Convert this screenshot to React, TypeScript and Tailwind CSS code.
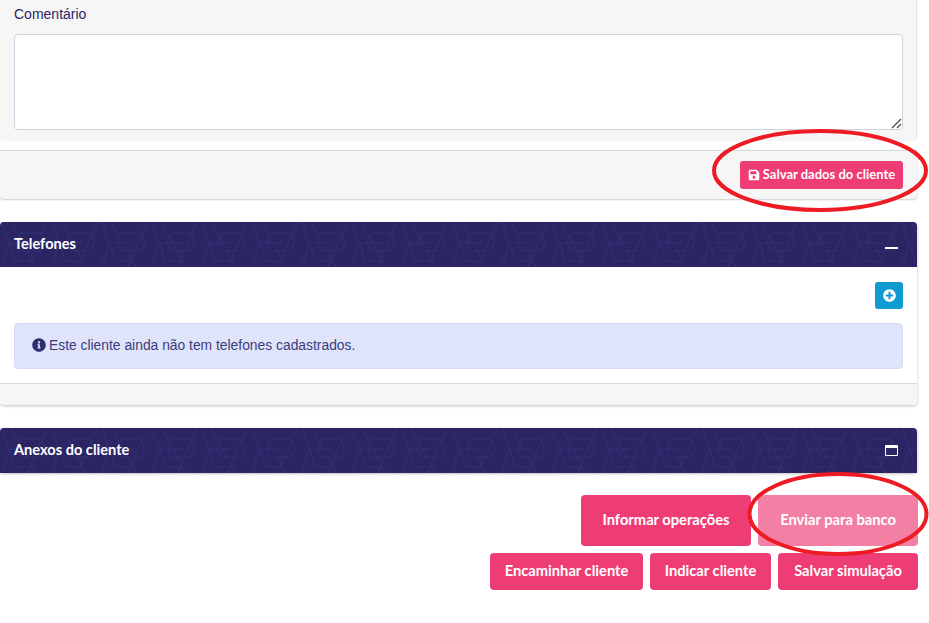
import type { ReactNode } from "react";
import { FaInfoCircle, FaPlusCircle, FaSave } from "react-icons/fa";

const HeaderPattern = ({ id }: { id: string }) => (
  <svg className="absolute inset-0 h-full w-full" aria-hidden="true">
    <defs>
      <pattern id={id} width="50" height="45" patternUnits="userSpaceOnUse">
        <path
          d="M11 0l25 45M47 0L28 45M21 11h20l4 9-4 9H21l-4-9zM10 21h23M15 39h18M10 21l5 18M2 0l7 21-7 24"
          fill="none"
          stroke="#322e75"
          strokeWidth="1"
        />
      </pattern>
    </defs>
    <rect width="100%" height="100%" fill={`url(#${id})`} />
  </svg>
);

const PanelHeader = ({ id, title, children }: { id: string; title: string; children: ReactNode }) => (
  <div className="relative flex h-[45px] items-center justify-between overflow-hidden rounded-t bg-[#2b2663] pl-[14px] pr-[19px]">
    <HeaderPattern id={id} />
    <span className="relative pb-[2px] font-['Lato',sans-serif] text-[14.6px] font-bold text-white">{title}</span>
    <span className="relative">{children}</span>
  </div>
);

const PinkButton = ({ label, className }: { label: string; className: string }) => (
  <button className={`rounded bg-[#ee3d74] pb-[2px] font-['Lato',sans-serif] text-[14.7px] font-bold text-white ${className}`}>
    {label}
  </button>
);

export default function App() {
  return (
    <div className="relative h-[623px] w-[929px] overflow-hidden bg-white font-['Liberation_Sans',sans-serif]">
      <div className="w-[917px]">
        <div className="h-[141px] rounded-b border-r border-[#e4e4e4] bg-[#f6f6f6] pl-[14px] pr-[13px]">
          <div className="pt-[6px] text-[14px] leading-[16px] text-[#2b2663]">Comentário</div>
          <div className="relative mt-[12px] h-[96px] rounded border border-[#cdd3e0] bg-white">
            <svg className="absolute bottom-0 right-0" width="12" height="12" viewBox="0 0 12 12">
              <path d="M2 11l9-9M7 11l4-4" stroke="#444" strokeWidth="1.2" />
            </svg>
          </div>
        </div>
        <div className="mt-[9px] flex h-[49px] items-center justify-end rounded-b border-t border-[#d8d8d8] bg-[#f6f6f6] pr-[14px] shadow-[0_1px_2px_rgba(0,0,0,0.2)]">
          <button className="flex h-[28px] w-[163px] items-center justify-center gap-[3px] rounded-[3px] bg-[#ee3d74] font-['Lato',sans-serif] text-[13px] font-bold text-white">
            <FaSave size={12} />
            Salvar dados do cliente
          </button>
        </div>

        <div className="mt-[23px] rounded shadow-[0_1px_3px_rgba(0,0,0,0.25)]">
          <PanelHeader id="hex-a" title="Telefones">
            <span className="mt-[7px] block h-[1.5px] w-[13px] bg-white" />
          </PanelHeader>
          <div className="h-[116px] bg-white px-[14px] pt-[15px]">
            <div className="flex justify-end">
              <button className="flex h-[27px] w-[28px] items-center justify-center rounded-[3px] bg-[#0f9bd0] text-white">
                <FaPlusCircle size={13} />
              </button>
            </div>
            <div className="mt-[14px] flex h-[46px] items-center gap-[3px] rounded border border-[#d3dbf5] bg-[#dfe4fa] pb-[2px] pl-[17px] text-[13.85px] text-[#3c3c7c]">
              <FaInfoCircle size={14} className="text-[#2b2f72]" />
              Este cliente ainda não tem telefones cadastrados.
            </div>
          </div>
          <div className="h-[22px] rounded-b border-t border-[#d8d8d8] bg-[#f6f6f6]" />
        </div>

        <div className="mt-[23px] rounded shadow-[0_1px_3px_rgba(0,0,0,0.25)]">
          <PanelHeader id="hex-b" title="Anexos do cliente">
            <span className="block h-[11px] w-[13px] rounded-[1px] border border-t-[3px] border-white" />
          </PanelHeader>
        </div>

        <div className="-mr-px mt-[22px] flex justify-end gap-[7px]">
          <PinkButton label="Informar operações" className="h-[51px] w-[170px]" />
          <PinkButton label="Enviar para banco" className="h-[51px] w-[160px] opacity-65" />
        </div>
        <div className="-mr-px mt-[7px] flex justify-end gap-[7px]">
          <PinkButton label="Encaminhar cliente" className="h-[37px] w-[153px]" />
          <PinkButton label="Indicar cliente" className="h-[37px] w-[121px]" />
          <PinkButton label="Salvar simulação" className="h-[37px] w-[140px]" />
        </div>
      </div>

      <svg className="pointer-events-none absolute inset-0" width="929" height="623" aria-hidden="true">
        <ellipse cx="820" cy="170.5" rx="106" ry="39.5" fill="none" stroke="#ed1c24" strokeWidth="4" />
        <ellipse cx="838" cy="514" rx="88.5" ry="40" fill="none" stroke="#ed1c24" strokeWidth="4" />
      </svg>
    </div>
  );
}
